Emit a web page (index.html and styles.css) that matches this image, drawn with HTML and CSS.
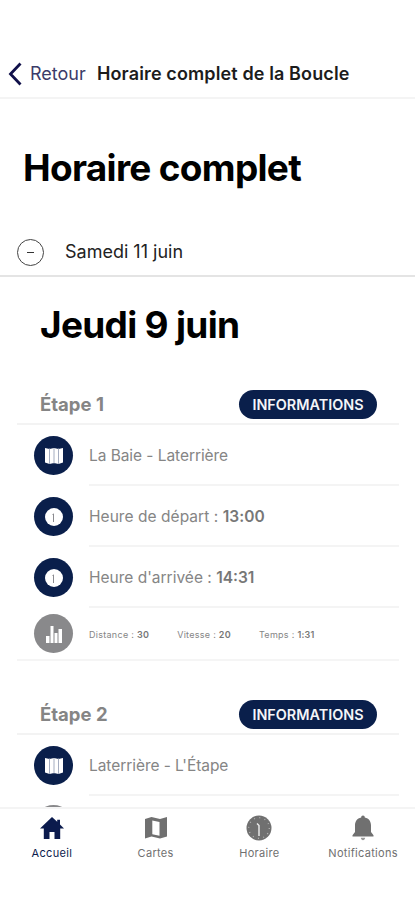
FILE: index.html
```html
<!doctype html>
<html lang="fr">
    <head>
        <meta charset="utf-8">
        <meta name="viewport" content="width=device-width, initial-scale=1">
        <title>Horaire complet de la Boucle</title>
        <link rel="stylesheet" href="styles.css">
    </head>
    <body>
        <svg class="sprite" width="0" height="0">
            <symbol id="map" viewBox="0 0 18 18">
                <path d="M0 1l4.500 1L9 1l4.500 1L18 1v14.500l-4.500 1.500L9 16l-4.500 1L0 15.500z" fill="#fff"/>
                <path d="M4.500 1.500V17M9 1v15.500M13.500 1.500V17" stroke="#a4adc0" stroke-width="1"/>
            </symbol>
            <symbol id="clock" viewBox="0 0 18 18">
                <circle cx="9" cy="9" r="9" fill="#fff"/>
                <path d="M7.500 6.500l1-.6V14" fill="none" stroke="#8b8b90" stroke-width="1"/>
            </symbol>
            <symbol id="chart" viewBox="0 0 18 18">
                <path d="M1 11h3.500v7h-3.500zM5.500 1h3v17h-3zM9.500 8h3v10h-3zM13.500 4h3.500v14h-3.500z" fill="#fff"/>
            </symbol>
        </svg>

        <header class="navbar">
            <a class="back" href="#">
                <svg width="14" height="24" viewBox="0 0 14 24"><path d="M12.500 1.500L2.500 12l10 10.500" fill="none" stroke="#10104a" stroke-width="2.800"/></svg>
                <span>Retour</span>
            </a>
            <span class="navbar-title">Horaire complet de la Boucle</span>
        </header>

        <main class="content">
            <h1>Horaire complet</h1>

            <div class="day">
                <span class="toggle"></span>
                <span class="day-name">Samedi 11 juin</span>
            </div>

            <h2>Jeudi 9 juin</h2>

            <section class="stage">
                <div class="stage-header">
                    <h3>Étape 1</h3>
                    <a class="button" href="#"><span>INFORMATIONS</span></a>
                </div>
                <div class="item">
                    <span class="icon"><svg width="18" height="18"><use href="#map"/></svg></span>
                    <p class="item-text"><span class="route">La Baie - Laterrière</span></p>
                </div>
                <div class="item">
                    <span class="icon"><svg width="18" height="18"><use href="#clock"/></svg></span>
                    <p class="item-text"><span class="depart">Heure de départ : <b>13:00</b></span></p>
                </div>
                <div class="item">
                    <span class="icon"><svg width="18" height="18"><use href="#clock"/></svg></span>
                    <p class="item-text"><span>Heure d'arrivée : <b>14:31</b></span></p>
                </div>
                <div class="item stats">
                    <span class="icon grey"><svg width="18" height="18"><use href="#chart"/></svg></span>
                    <p class="item-text">
                        <span>Distance : <b>30</b></span>
                        <span>Vitesse : <b>20</b></span>
                        <span>Temps : <b>1:31</b></span>
                    </p>
                </div>
            </section>

            <section class="stage">
                <div class="stage-header">
                    <h3>Étape 2</h3>
                    <a class="button" href="#"><span>INFORMATIONS</span></a>
                </div>
                <div class="item">
                    <span class="icon"><svg width="18" height="18"><use href="#map"/></svg></span>
                    <p class="item-text"><span class="route">Laterrière - L'Étape</span></p>
                </div>
                <div class="item next">
                    <span class="icon grey"></span>
                </div>
            </section>
        </main>

        <nav class="tabbar">
            <a class="tab active" href="#">
                <svg width="24" height="24" viewBox="0 0 24 24"><path d="M12 1L0 12.400h3.800V23H9.500v-7h5v7h5.700V12.400H24L20 8.500V3.800h-2.800v2z" fill="currentColor"/></svg>
                <span>Accueil</span>
            </a>
            <a class="tab" href="#">
                <svg width="24" height="24" viewBox="0 0 24 24"><path fill-rule="evenodd" d="M1 3L7.500 1l8.500 2 7-2V20.500l-7 2-8.500-2L1 22.500zM8.300 4.500v13.800l7.200 1.500V6z" fill="currentColor"/></svg>
                <span>Cartes</span>
            </a>
            <a class="tab" href="#">
                <svg width="26" height="26" viewBox="0 0 26 26">
                    <circle cx="13" cy="13" r="12.500" fill="currentColor"/>
                    <circle cx="13" cy="13" r="10.300" fill="none" stroke="#b4b4b4" stroke-width="1.300" stroke-dasharray="1 4.393"/>
                    <path d="M11 8.500l2 2V21" fill="none" stroke="#eee" stroke-width="1.400"/>
                </svg>
                <span>Horaire</span>
            </a>
            <a class="tab" href="#">
                <svg width="22" height="26" viewBox="0 0 22 26"><path d="M11 .5c1.200 0 1.800.8 1.800 2C17 3.300 19 6.500 19 10.500V17l2.500 3.200v1.300H.5v-1.300L3 17v-6.500c0-4 2-7.200 6.200-8 0-1.200.6-2 1.800-2z" fill="currentColor"/><path d="M8.800 22.700h4.400c-.3 3.300-4.100 3.300-4.400 0z" fill="#999"/></svg>
                <span>Notifications</span>
            </a>
        </nav>
    </body>
</html>
```
FILE: styles.css
```css
* {
    box-sizing: border-box;
}

body {
    margin: 0;
    height: 100vh;
    overflow: hidden;
    display: flex;
    flex-direction: column;
    background: #fff;
    color: #000;
    font-family: Inter, "Liberation Sans", sans-serif;
}

a {
    color: inherit;
    text-decoration: none;
}

h1, h2, h3, p {
    margin: 0;
}

.sprite {
    display: block;
    flex: none;
}

.navbar {
    height: 99px;
    flex: none;
    display: flex;
    align-items: center;
    gap: 10px;
    padding: 50px 8px 0;
    border-bottom: 2px solid #f4f4f4;
    white-space: nowrap;
}

.back {
    display: flex;
    align-items: center;
    gap: 8px;
    width: 79px;
    color: #3b3b69;
    font-size: 18px;
}

.navbar-title {
    color: #1c1c1c;
    font-size: 18px;
    font-weight: 600;
    letter-spacing: 0.12px;
}

.content {
    flex: 1;
    min-height: 0;
    overflow: hidden;
}

h1 {
    padding: 45px 23px 0;
    font-size: 37px;
    line-height: 48px;
    letter-spacing: -0.7px;
}

.day {
    height: 49px;
    margin-top: 36px;
    padding: 0 17px;
    display: flex;
    align-items: center;
    gap: 21px;
    border-bottom: 2px solid #e4e4e4;
}

.toggle {
    width: 27px;
    height: 27px;
    margin-top: 2px;
    border: 1px solid #444;
    border-radius: 50%;
    display: flex;
    align-items: center;
    justify-content: center;
}

.toggle::before {
    content: "";
    width: 7px;
    height: 1.500px;
    background: #333;
}

.day-name {
    color: #222;
    font-size: 18px;
}

h2 {
    padding: 24px 40px 0;
    font-size: 37px;
    line-height: 48px;
    letter-spacing: -0.7px;
}

.stage {
    margin: 35px 16px 0 17px;
}

.stage + .stage {
    margin-top: 33px;
}

.stage-header {
    height: 41px;
    padding: 0 22px 0 23px;
    display: flex;
    align-items: center;
    justify-content: space-between;
    border-bottom: 2px solid #f3f3f3;
}

h3 {
    color: #858585;
    font-size: 18.500px;
}

.button {
    width: 138px;
    height: 29px;
    margin-top: 2px;
    display: flex;
    align-items: center;
    justify-content: center;
    border-radius: 15px;
    background: #0a1f4b;
    color: #f4f5f8;
    font-size: 14.400px;
    font-weight: 600;
}

.item {
    height: 61px;
    padding-left: 17px;
    display: flex;
    align-items: center;
    gap: 16px;
}

.icon {
    width: 39px;
    height: 39px;
    flex: none;
    display: flex;
    align-items: center;
    justify-content: center;
    border-radius: 50%;
    background: #0a1f4b;
}

.grey {
    background: #89898b;
}

.item-text {
    flex: 1;
    height: 100%;
    padding-top: 2px;
    display: flex;
    align-items: center;
    border-bottom: 2px solid #f4f4f4;
    color: #858585;
    font-size: 15.500px;
    white-space: nowrap;
}

.item-text b {
    font-weight: 600;
    color: #777;
}

.route {
    letter-spacing: -0.06px;
}

.depart {
    letter-spacing: 0.05px;
}

.stats {
    height: 53px;
    border-bottom: 2px solid #f5f5f5;
}

.stats .item-text {
    gap: 28px;
    border-bottom: 0;
    font-size: 9px;
    letter-spacing: 0.28px;
}

.next {
    align-items: flex-start;
    padding-top: 9px;
}

.tabbar {
    height: 93px;
    flex: none;
    display: grid;
    grid-template-columns: repeat(4, 1fr);
    padding-top: 6px;
    border-top: 2px solid #f4f4f4;
    background: #fff;
}

.tab {
    display: flex;
    flex-direction: column;
    align-items: center;
    color: #707070;
    font-size: 11px;
    letter-spacing: 0.3px;
}

.tab svg {
    height: 26px;
}

.tab span {
    margin-top: 5px;
}

.active {
    color: #0b1b4d;
}
```
